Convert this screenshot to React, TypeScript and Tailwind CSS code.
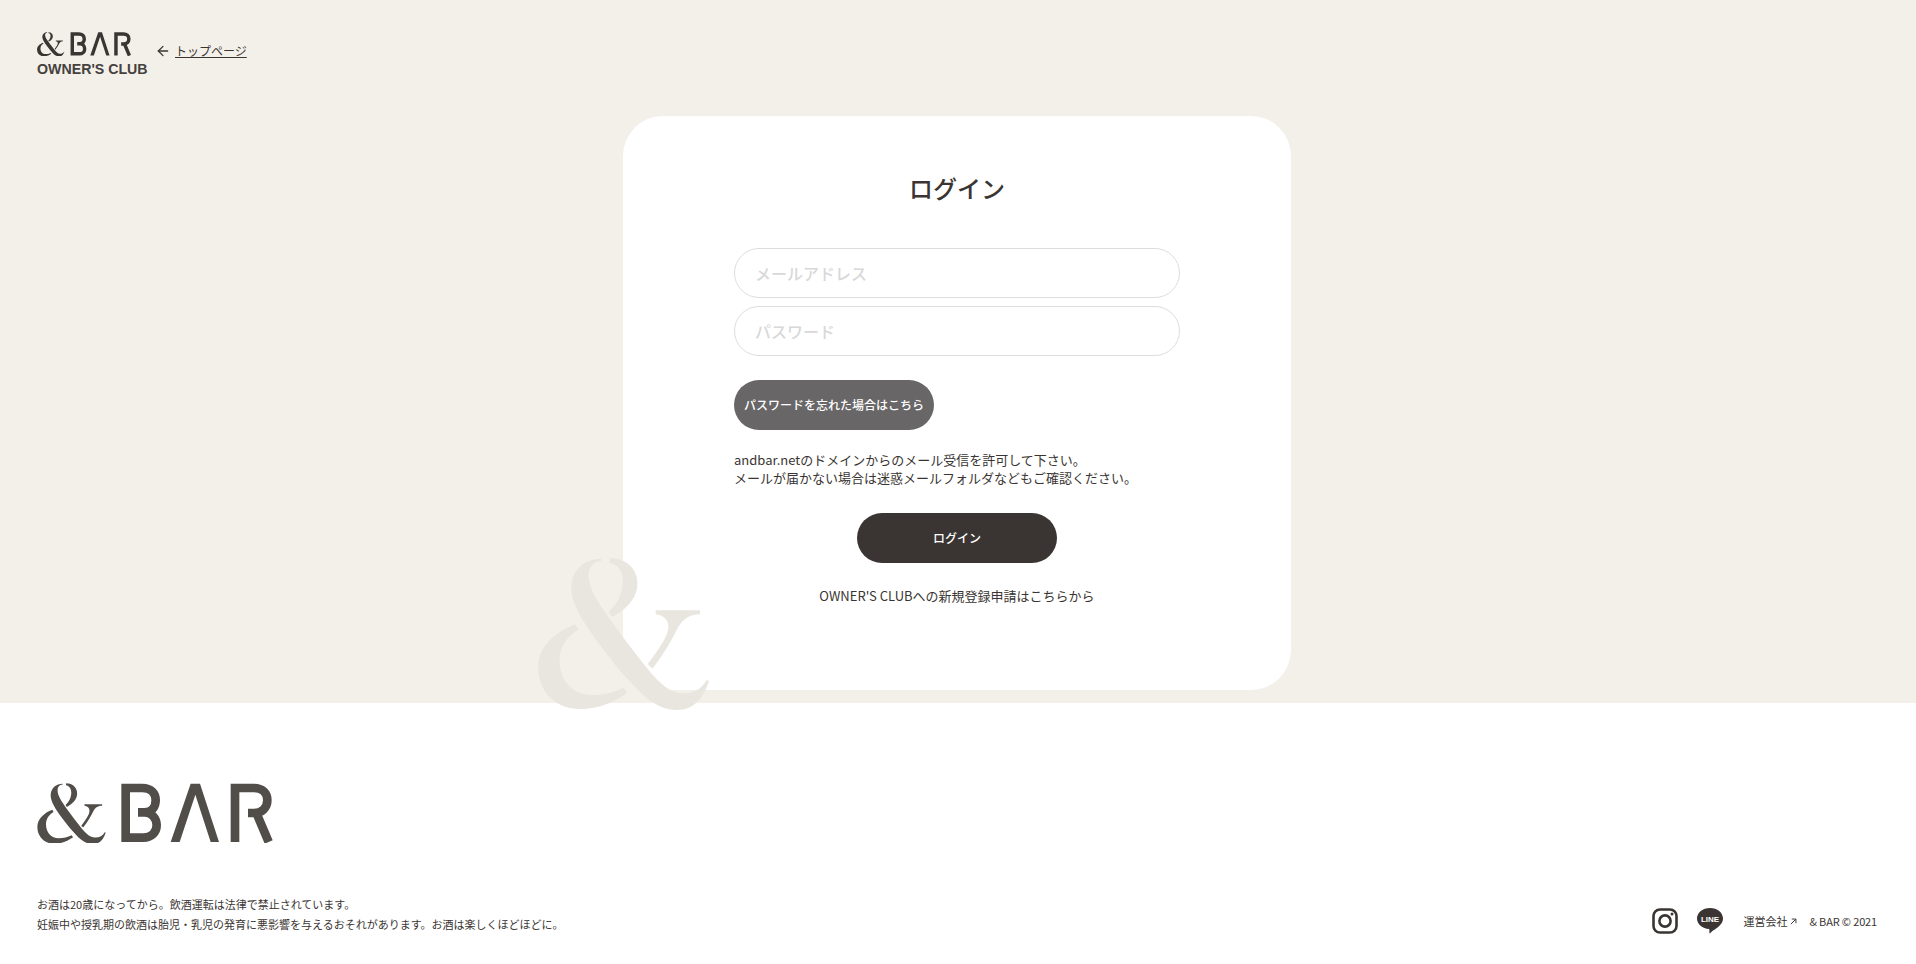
import { ArrowLeft } from "lucide-react";

const AMP_PATHS = [
  "M303 115 C255 116 213 145 213 205 C213 250 250 310 300 375 C340 430 375 470 400 495 C440 540 480 570 530 570 C585 570 612 530 627 482 L620 480 C605 508 580 521 545 520 C510 518 480 492 445 450 C410 405 375 362 335 305 C295 250 265 205 265 165 C265 140 278 124 303 122 Z",
  "M330 113 L328 127 C350 131 368 150 368 182 C368 220 350 255 325 275 L335 290 C375 272 412 235 412 190 C412 145 380 115 330 113 Z",
  "M225 312 C165 335 113 380 113 440 C113 515 165 567 240 567 C295 567 340 547 382 518 L370 503 C340 518 310 525 275 525 C215 525 178 480 178 420 C178 380 200 348 235 328 Z",
  "M467 270 L600 270 L600 282 C570 283 552 292 535 320 C515 360 490 405 457 445 L443 432 C470 395 505 350 505 318 C505 298 490 285 467 282 Z",
];

function Ampersand({ className }: { className: string }) {
  return (
    <svg viewBox="113 113 514 457" className={className} fill="currentColor">
      {AMP_PATHS.map((d) => (
        <path key={d} d={d} />
      ))}
    </svg>
  );
}

function Logo({ className }: { className: string }) {
  return (
    <svg viewBox="110 70 706 180" className={className}>
      <g fill="currentColor" transform="translate(65 26) scale(0.399)">
        {AMP_PATHS.map((d) => (
          <path key={d} d={d} />
        ))}
      </g>
      <g fill="none" stroke="currentColor" strokeWidth="26">
        <path d="M412 158 H432 C455 158 465 140 465 122 C465 100 450 85 425 85 H375 V234 H428 C452 234 468 218 468 197 C468 175 452 158 432 158" />
        <path d="M703 247 V85 H760 C785 85 800 100 800 122 C800 146 782 160 760 160 H742 M768 162 L804 247" />
      </g>
      <polygon fill="currentColor" points="510,247 570,72 598,72 655,247 630,247 584,105 537,247" />
    </svg>
  );
}

function InstagramIcon() {
  return (
    <svg viewBox="0 0 26 26" className="w-[26px] h-[26px] text-[#3a3532]" fill="none" stroke="currentColor">
      <rect x="1.5" y="1.5" width="23" height="23" rx="6.5" strokeWidth="2.6" />
      <circle cx="13" cy="13" r="5.6" strokeWidth="2.6" />
      <circle cx="20" cy="6" r="1.5" fill="currentColor" stroke="none" />
    </svg>
  );
}

function LineIcon() {
  return (
    <svg viewBox="0 0 26 26" className="w-[26px] h-[26px] text-[#3a3532]">
      <path
        fill="currentColor"
        d="M13 0 C20.2 0 26 4.6 26 10.6 C26 16 21 19.6 16.5 22.3 C15 23.2 13.6 25 12.6 25.6 C12.2 24.4 12.6 22.6 12.2 21 C5.4 20.8 0 16.4 0 10.6 C0 4.6 5.8 0 13 0 Z"
      />
      <text x="13" y="13.6" textAnchor="middle" fontSize="8" fontWeight="900" fill="#fff" fontFamily="Liberation Sans, sans-serif">
        LINE
      </text>
    </svg>
  );
}

export default function App() {
  return (
    <div className="relative min-h-[964px] bg-white text-[#3a3532] [font-family:'Noto_Sans_CJK_JP','Noto_Sans',sans-serif]">
      {/* Top area */}
      <section className="h-[703px] bg-[#f3f0ea] overflow-visible pr-[2px]">
        <header className="h-[116px] px-[37px] pt-[32px] flex items-start">
          <a href="#" className="block w-[110px]">
            <Logo className="w-[94px] h-[24px] text-[#3a3532]" />
            <div className="mt-[4px] text-[14.2px] leading-[18px] font-bold whitespace-nowrap text-[#45413d] [font-family:'Liberation_Sans',sans-serif]">
              OWNER'S CLUB
            </div>
          </a>
          <a href="#" className="ml-[8px] mt-[11px] flex items-center gap-[4px] text-[12px] leading-[16px]">
            <ArrowLeft size={16} strokeWidth={1.9} />
            <span className="underline">トップページ</span>
          </a>
        </header>

        <main className="mx-auto w-[668px] h-[574px] rounded-[40px] bg-white pt-[54px] flex flex-col items-center">
          <h1 className="text-[24px] leading-[36px] font-medium">ログイン</h1>

          <form className="mt-[42px] w-[446px] flex flex-col" onSubmit={(e) => e.preventDefault()}>
            <input
              type="email"
              placeholder="メールアドレス"
              className="h-[50px] px-[20px] rounded-full border border-[#dddddd] bg-white text-[16px] font-medium placeholder:text-[#d8d8d8] outline-none"
            />
            <input
              type="password"
              placeholder="パスワード"
              className="mt-[8px] h-[50px] px-[20px] rounded-full border border-[#dddddd] bg-white text-[16px] font-medium placeholder:text-[#d8d8d8] outline-none"
            />
            <button type="button" className="mt-[24px] w-[200px] h-[50px] rounded-full bg-[#686667] text-white text-[12px] font-medium whitespace-nowrap">
              パスワードを忘れた場合はこちら
            </button>
            <p className="mt-[21px] text-[13px] leading-[18px]">
              andbar.netのドメインからのメール受信を許可して下さい。
              <br />
              メールが届かない場合は迷惑メールフォルダなどもご確認ください。
            </p>
            <button type="submit" className="mt-[26px] self-center w-[200px] h-[50px] rounded-full bg-[#3a3532] text-white text-[12px] font-medium">
              ログイン
            </button>
          </form>

          <a href="#" className="mt-[23px] text-[13px] leading-[20px]">
            OWNER'S CLUBへの新規登録申請はこちらから
          </a>
        </main>
      </section>

      {/* Watermark */}
      <Ampersand className="absolute z-10 left-[538px] top-[558px] w-[171px] h-[152px] text-[#e9e6df] pointer-events-none" />

      {/* Footer */}
      <footer className="h-[261px] pl-[37px] pr-[39px] pt-[80px]">
        <Logo className="w-[236px] h-[60px] text-[#514d49]" />
        <div className="mt-[51px] flex items-end justify-between">
          <div className="text-[11px] leading-[20px]">
            <p>お酒は20歳になってから。飲酒運転は法律で禁止されています。</p>
            <p>妊娠中や授乳期の飲酒は胎児・乳児の発育に悪影響を与えるおそれがあります。お酒は楽しくほどほどに。</p>
          </div>
          <div className="flex items-center text-[11px] leading-[16px]">
            <InstagramIcon />
            <span className="ml-[19px]">
              <LineIcon />
            </span>
            <a href="#" className="ml-[20px] flex items-center gap-[3px]">
              運営会社
              <svg viewBox="0 0 8 8" className="w-[7px] h-[7px]" fill="none" stroke="currentColor" strokeWidth="1.1">
                <path d="M1 7 L6.5 1.5 M2 1.2 H6.8 V6" />
              </svg>
            </a>
            <span className="ml-[12px] tracking-[-0.15px]">&amp; BAR © 2021</span>
          </div>
        </div>
      </footer>
    </div>
  );
}
